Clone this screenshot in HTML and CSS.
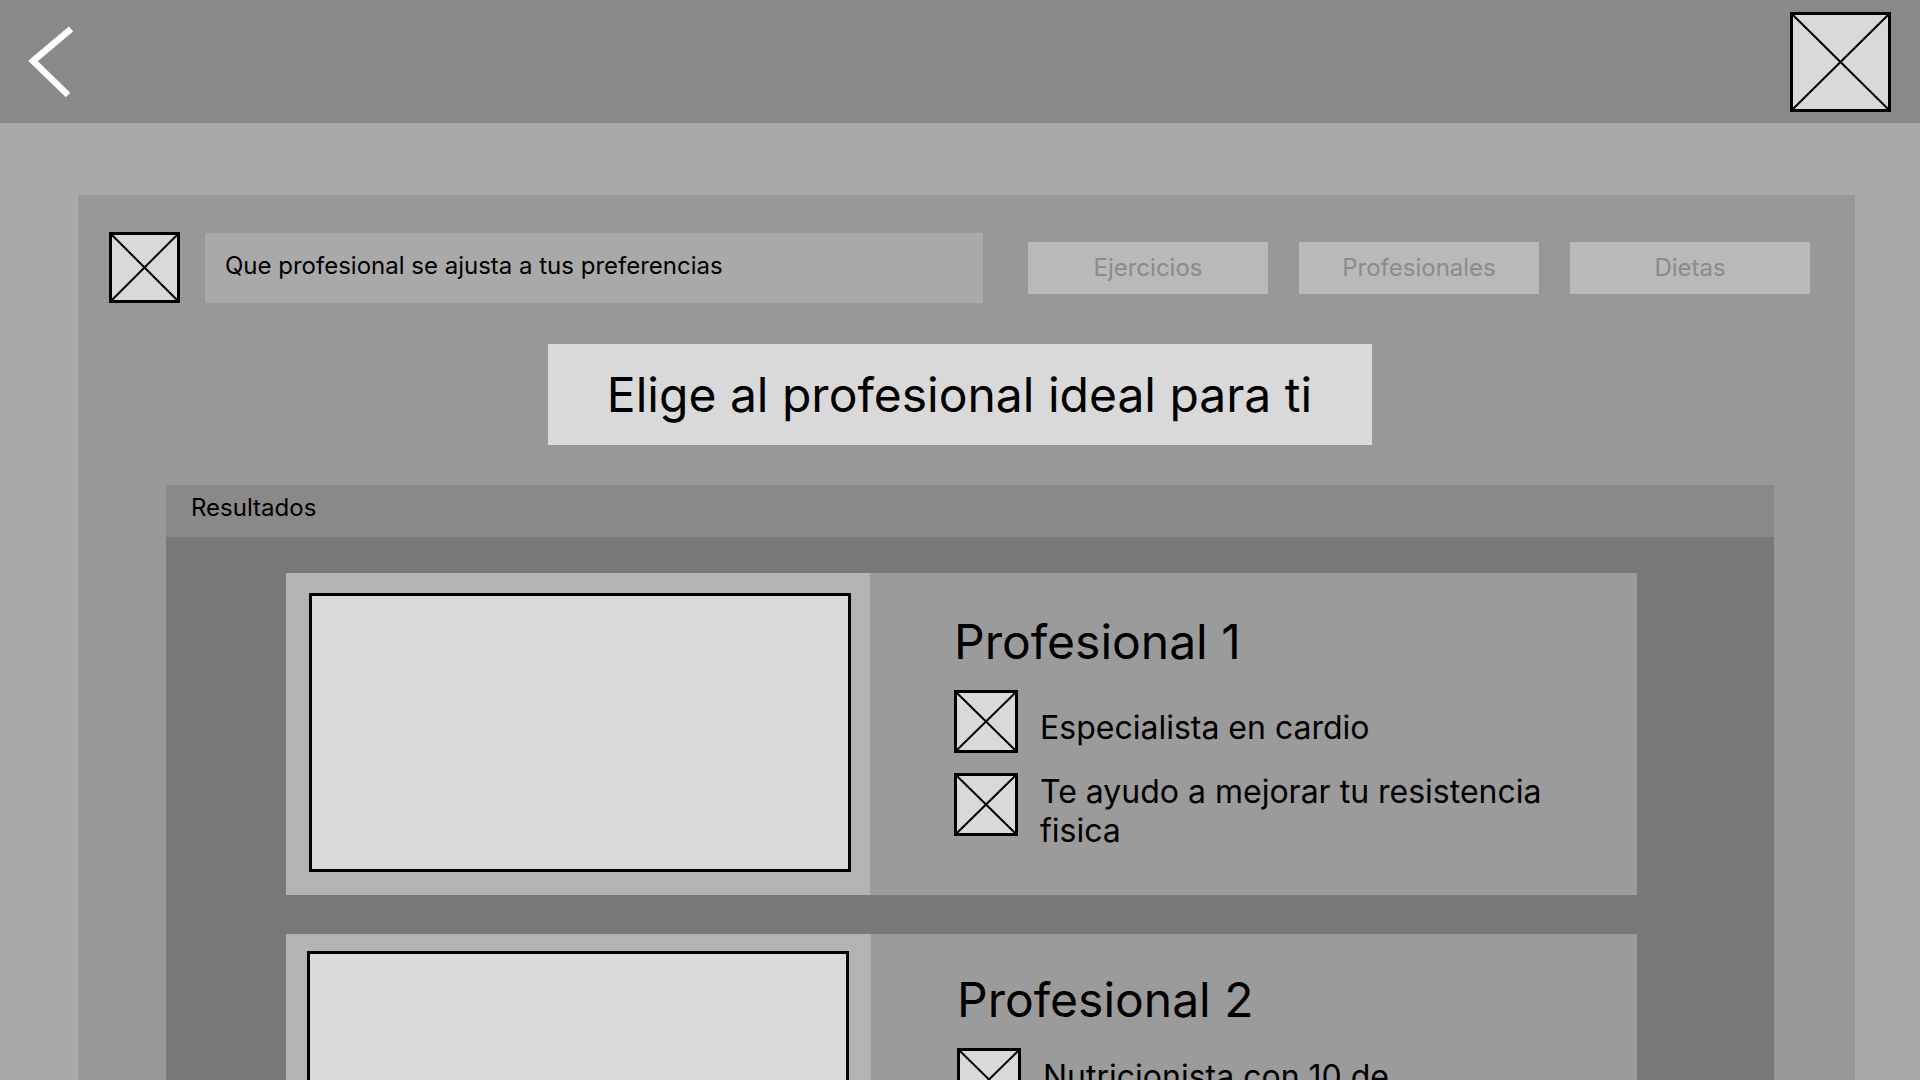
FILE: index.html
```html
<!DOCTYPE html>
<html lang="es">
<head>
<meta charset="utf-8">
<title>Profesionales</title>
<link rel="stylesheet" href="styles.css">
</head>
<body>
<header class="topbar">
  <svg class="back" viewBox="0 0 100 123" width="100" height="123" aria-label="Volver">
    <polyline points="71,29 33,61 68,95" fill="none" stroke="#ffffff" stroke-width="6.5"/>
  </svg>
  <div class="ph ph-top">
    <svg viewBox="0 0 100 100" preserveAspectRatio="none"><line x1="0" y1="0" x2="100" y2="100" vector-effect="non-scaling-stroke"/><line x1="100" y1="0" x2="0" y2="100" vector-effect="non-scaling-stroke"/></svg>
  </div>
</header>

<main class="panel">
  <div class="toprow">
    <div class="ph ph-search">
      <svg viewBox="0 0 100 100" preserveAspectRatio="none"><line x1="0" y1="0" x2="100" y2="100" vector-effect="non-scaling-stroke"/><line x1="100" y1="0" x2="0" y2="100" vector-effect="non-scaling-stroke"/></svg>
    </div>
    <div class="search">Que profesional se ajusta a tus preferencias</div>
    <nav class="tabs">
      <div class="tab">Ejercicios</div>
      <div class="tab">Profesionales</div>
      <div class="tab">Dietas</div>
    </nav>
  </div>

  <h1 class="title">Elige al profesional ideal para ti</h1>

  <section class="results">
    <div class="results-head">Resultados</div>
    <div class="results-body">
      <article class="card">
        <div class="card-media"><div class="photo"></div></div>
        <div class="card-info">
          <h2 class="card-name">Profesional 1</h2>
          <ul class="features">
            <li class="feature">
              <div class="ph ph-feat">
                <svg viewBox="0 0 100 100" preserveAspectRatio="none"><line x1="0" y1="0" x2="100" y2="100" vector-effect="non-scaling-stroke"/><line x1="100" y1="0" x2="0" y2="100" vector-effect="non-scaling-stroke"/></svg>
              </div>
              <span class="feature-text">Especialista en cardio</span>
            </li>
            <li class="feature">
              <div class="ph ph-feat">
                <svg viewBox="0 0 100 100" preserveAspectRatio="none"><line x1="0" y1="0" x2="100" y2="100" vector-effect="non-scaling-stroke"/><line x1="100" y1="0" x2="0" y2="100" vector-effect="non-scaling-stroke"/></svg>
              </div>
              <span class="feature-text">Te ayudo a mejorar tu resistencia fisica</span>
            </li>
          </ul>
        </div>
      </article>

      <article class="card card-alt">
        <div class="card-media"><div class="photo"></div></div>
        <div class="card-info">
          <h2 class="card-name">Profesional 2</h2>
          <ul class="features">
            <li class="feature">
              <div class="ph ph-feat">
                <svg viewBox="0 0 100 100" preserveAspectRatio="none"><line x1="0" y1="0" x2="100" y2="100" vector-effect="non-scaling-stroke"/><line x1="100" y1="0" x2="0" y2="100" vector-effect="non-scaling-stroke"/></svg>
              </div>
              <span class="feature-text">Nutricionista con 10 de experiencia</span>
            </li>
          </ul>
        </div>
      </article>
    </div>
  </section>
</main>
</body>
</html>
```
FILE: styles.css
```css
html, body {
  margin: 0;
  padding: 0;
  width: 1920px;
  height: 1080px;
  overflow: hidden;
}
body {
  background: #a9a9a9;
  font-family: Inter, "Noto Sans", sans-serif;
  color: #000;
}
* { box-sizing: border-box; }

.topbar {
  height: 123px;
  background: #898989;
  display: flex;
  align-items: center;
  justify-content: space-between;
  padding-right: 29px;
}
.back { display: block; }

.ph {
  background: #d9d9d9;
  border: 3px solid #000;
  flex: none;
}
.ph svg {
  display: block;
  width: 100%;
  height: 100%;
}
.ph line {
  stroke: #000;
  stroke-width: 2;
}
.ph-top { width: 101px; height: 100px; }
.ph-search { width: 71px; height: 71px; }
.ph-feat { width: 64px; height: 63px; }

.panel {
  margin: 72px 65px 0 78px;
  height: 885px;
  background: #989898;
  padding: 37px 45px 0 31px;
}

.toprow {
  display: flex;
  align-items: center;
}
.search {
  margin-left: 25px;
  width: 778px;
  height: 70px;
  background: #a9a9a9;
  font-size: 24px;
  padding: 18px 0 0 20px;
  line-height: 29px;
}
.tabs {
  margin-left: 45px;
  display: flex;
  gap: 31px;
}
.tab {
  width: 240px;
  height: 52px;
  background: #b9b9b9;
  color: #8b8b8b;
  font-size: 24px;
  display: flex;
  align-items: center;
  justify-content: center;
}

.title {
  margin: 41px auto 0;
  width: 824px;
  height: 101px;
  background: #d9d9d9;
  font-size: 48px;
  font-weight: 400;
  display: flex;
  align-items: center;
  justify-content: center;
}

.results {
  margin: 40px 0 0 57px;
  width: 1608px;
}
.results-head {
  height: 52px;
  background: #898989;
  font-size: 24px;
  line-height: 29px;
  padding: 8px 25px 0;
}
.results-body {
  background: #787878;
  height: 600px;
  padding: 36px 0 0 120px;
  display: flex;
  flex-direction: column;
  gap: 39px;
}

.card {
  width: 1351px;
  height: 322px;
  display: flex;
  flex: none;
}
.card-media {
  width: 584px;
  background: #b3b3b3;
  padding: 20px 19px 23px 23px;
}
.photo {
  height: 279px;
  background: #d9d9d9;
  border: 3px solid #000;
}
.card-info {
  flex: 1;
  background: #9b9b9b;
  padding: 40px 84px 0 84px;
}
.card-name {
  margin: 0 0 19px;
  font-size: 48px;
  font-weight: 400;
  line-height: 58px;
}
.features {
  list-style: none;
  margin: 0;
  padding: 0;
  display: flex;
  flex-direction: column;
  gap: 20px;
}
.feature {
  display: flex;
  align-items: flex-start;
  gap: 22px;
}
.feature-text {
  height: 63px;
  padding-top: 12px;
  display: flex;
  align-items: center;
  font-size: 32px;
  line-height: 39px;
}

.card-alt .card-media {
  width: 585px;
  padding: 17px 22px 23px 21px;
}
.card-alt .card-info {
  padding: 37px 84px 0 86px;
}
.card-alt .feature-text {
  padding-top: 32px;
}
```
